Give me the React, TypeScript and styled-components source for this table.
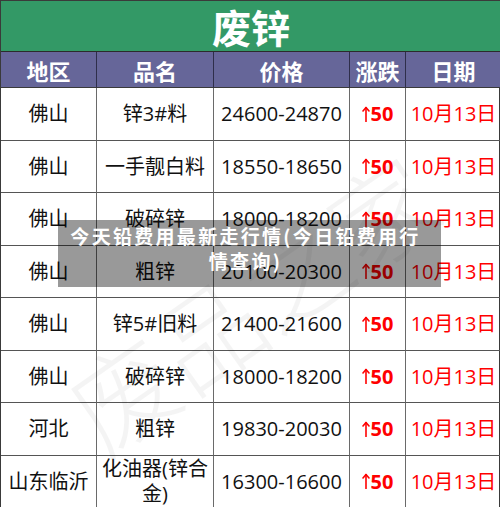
import * as React from 'react';
import styled, { createGlobalStyle } from 'styled-components';

const GlobalStyle = createGlobalStyle`
    html, body {
        margin: 0;
        padding: 0;
        background: #ffffff;
    }
    body {
        font-family: "Open Sans", "Noto Sans CJK SC", sans-serif;
    }
`;

const Page = styled.div`
    position: relative;
    width: 500px;
    height: 507px;
    overflow: hidden;
`;

const Table = styled.div`
    display: grid;
    grid-template-columns: 96px 117px 136px 56px 95px;
    grid-template-rows: 51px 36px repeat(8, 52.5px);
    box-sizing: border-box;
    width: 500px;
    border-left: 1px solid #3a3a3a;
    border-right: 1px solid #3a3a3a;
    border-top: 1px solid #3a3a3a;
`;

const Title = styled.div`
    grid-column: 1 / 6;
    display: flex;
    align-items: center;
    justify-content: center;
    background: #339966;
    color: #ffffff;
    font-family: "Noto Sans CJK SC", sans-serif;
    font-size: 39px;
    line-height: 50px;
    font-weight: 700;
    border-bottom: 1px solid #2b2b2b;
`;

const HeadCell = styled.div`
    display: flex;
    align-items: center;
    justify-content: center;
    background: #666699;
    color: #ffffff;
    font-family: "Noto Sans CJK SC", sans-serif;
    font-size: 22px;
    font-weight: 700;
    border-right: 1px solid #2e2e4a;
    border-bottom: 1px solid #3a3a3a;
    &:nth-child(6) {
        border-right: none;
    }
`;

const Cell = styled.div<{ $red?: boolean; $last?: boolean }>`
    display: flex;
    align-items: center;
    justify-content: center;
    text-align: center;
    box-sizing: border-box;
    padding: 0 2px;
    font-size: 20px;
    line-height: 25px;
    color: ${p => (p.$red ? '#ff0000' : '#111111')};
    border-right: ${p => (p.$last ? 'none' : '1px solid #6a6a6a')};
    border-bottom: 1px solid #555555;
`;

const Change = styled.span`
    display: inline-flex;
    align-items: center;
    gap: 1px;
    font-weight: 700;
    font-size: 20px;
    color: #ff0000;
`;

const Watermark = styled.div`
    position: absolute;
    left: 250px;
    top: 300px;
    font-size: 105px;
    font-weight: 300;
    color: rgba(0, 0, 0, 0.045);
    transform: translate(-50%, -50%) rotate(-35deg);
    white-space: nowrap;
    pointer-events: none;
    font-family: "Noto Sans CJK SC", serif;
`;

const Caption = styled.div`
    position: absolute;
    left: 58px;
    top: 220px;
    width: 383px;
    height: 67px;
    box-sizing: border-box;
    padding: 3px 8px 0 0;
    background: rgba(0, 0, 0, 0.4);
    color: #ffffff;
    font-family: "Noto Sans CJK SC", sans-serif;
    font-size: 19px;
    font-weight: 700;
    letter-spacing: 2.3px;
    line-height: 25px;
    text-align: center;
`;

const UpArrow = () => (
    <svg width="8" height="16" viewBox="0 0 8 16" fill="none" stroke="#ff0000" strokeWidth="1.6" strokeLinecap="round" strokeLinejoin="round">
        <path d="M4 1.5V15.5" />
        <path d="M1 5L4 1.5L7 5" />
    </svg>
);

const rows = [
    ['佛山', '锌3#料', '24600-24870'],
    ['佛山', '一手靓白料', '18550-18650'],
    ['佛山', '破碎锌', '18000-18200'],
    ['佛山', '粗锌', '20100-20300'],
    ['佛山', '锌5#旧料', '21400-21600'],
    ['佛山', '破碎锌', '18000-18200'],
    ['河北', '粗锌', '19830-20030'],
    ['山东临沂', '化油器(锌合金)', '16300-16600'],
];

export default function App() {
    return (
        <Page>
            <GlobalStyle />
            <Table>
                <Title>废锌</Title>
                <HeadCell>地区</HeadCell>
                <HeadCell>品名</HeadCell>
                <HeadCell>价格</HeadCell>
                <HeadCell>涨跌</HeadCell>
                <HeadCell>日期</HeadCell>
                {rows.map((r, i) => (
                    <React.Fragment key={i}>
                        <Cell>{r[0]}</Cell>
                        <Cell>{r[1]}</Cell>
                        <Cell>{r[2]}</Cell>
                        <Cell>
                            <Change><UpArrow />50</Change>
                        </Cell>
                        <Cell $red $last>10月13日</Cell>
                    </React.Fragment>
                ))}
            </Table>
            <Watermark>废品之家</Watermark>
            <Caption>
                今天铅费用最新走行情(今日铅费用行<br />情查询)
            </Caption>
        </Page>
    );
}
